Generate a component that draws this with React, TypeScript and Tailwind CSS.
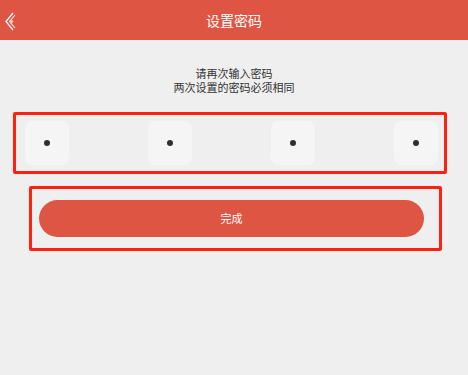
import React from "react";

const font = { fontFamily: '"Noto Sans CJK SC", "Noto Sans", sans-serif' };

function BackIcon() {
  return (
    <svg width="18" height="22" viewBox="0 0 18 22" className="block">
      <path d="M10 4 L3 12.5 L10 21" fill="none" stroke="#fff" strokeWidth="1.3" />
      <path d="M12 6 L6.6 12.5 L12 19" fill="none" stroke="#fff" strokeWidth="1.1" opacity="0.85" />
      <circle cx="8.6" cy="12.5" r="1.6" fill="#f6c9c2" />
    </svg>
  );
}

function PinCell() {
  return (
    <div className="flex h-[44px] w-[44px] items-center justify-center rounded-[7px] bg-[#f5f5f5]">
      <div className="h-[6px] w-[6px] rounded-full bg-[#2f2f2f]" />
    </div>
  );
}

export default function App() {
  return (
    <div className="h-[375px] w-[468px] bg-[#efefef]" style={font}>
      {/* Header */}
      <div className="relative flex h-[40px] items-center justify-center bg-[#de5544]">
        <div className="absolute left-[3px] top-[9px]">
          <BackIcon />
        </div>
        <span className="text-[14px] leading-none text-white">设置密码</span>
      </div>

      {/* Hint */}
      <div className="mt-[26px] flex flex-col items-center text-[11px] leading-[14px] text-[#333]">
        <span>请再次输入密码</span>
        <span>两次设置的密码必须相同</span>
      </div>

      {/* Pin cells */}
      <div className="ml-[13px] mt-[18px] flex h-[62px] w-[434px] items-center justify-between rounded-[2px] border-[3px] border-[#ff2012] pl-[9px] pr-[6px]">
        <PinCell />
        <PinCell />
        <PinCell />
        <PinCell />
      </div>

      {/* Button */}
      <div className="ml-[29px] mt-[12px] flex h-[65px] w-[413px] items-center rounded-[2px] border-[3px] border-[#ff2012] pl-[7px]">
        <button className="flex h-[37px] w-[385px] items-center justify-center rounded-full bg-[#de5544] text-[11px] text-white">
          完成
        </button>
      </div>
    </div>
  );
}
